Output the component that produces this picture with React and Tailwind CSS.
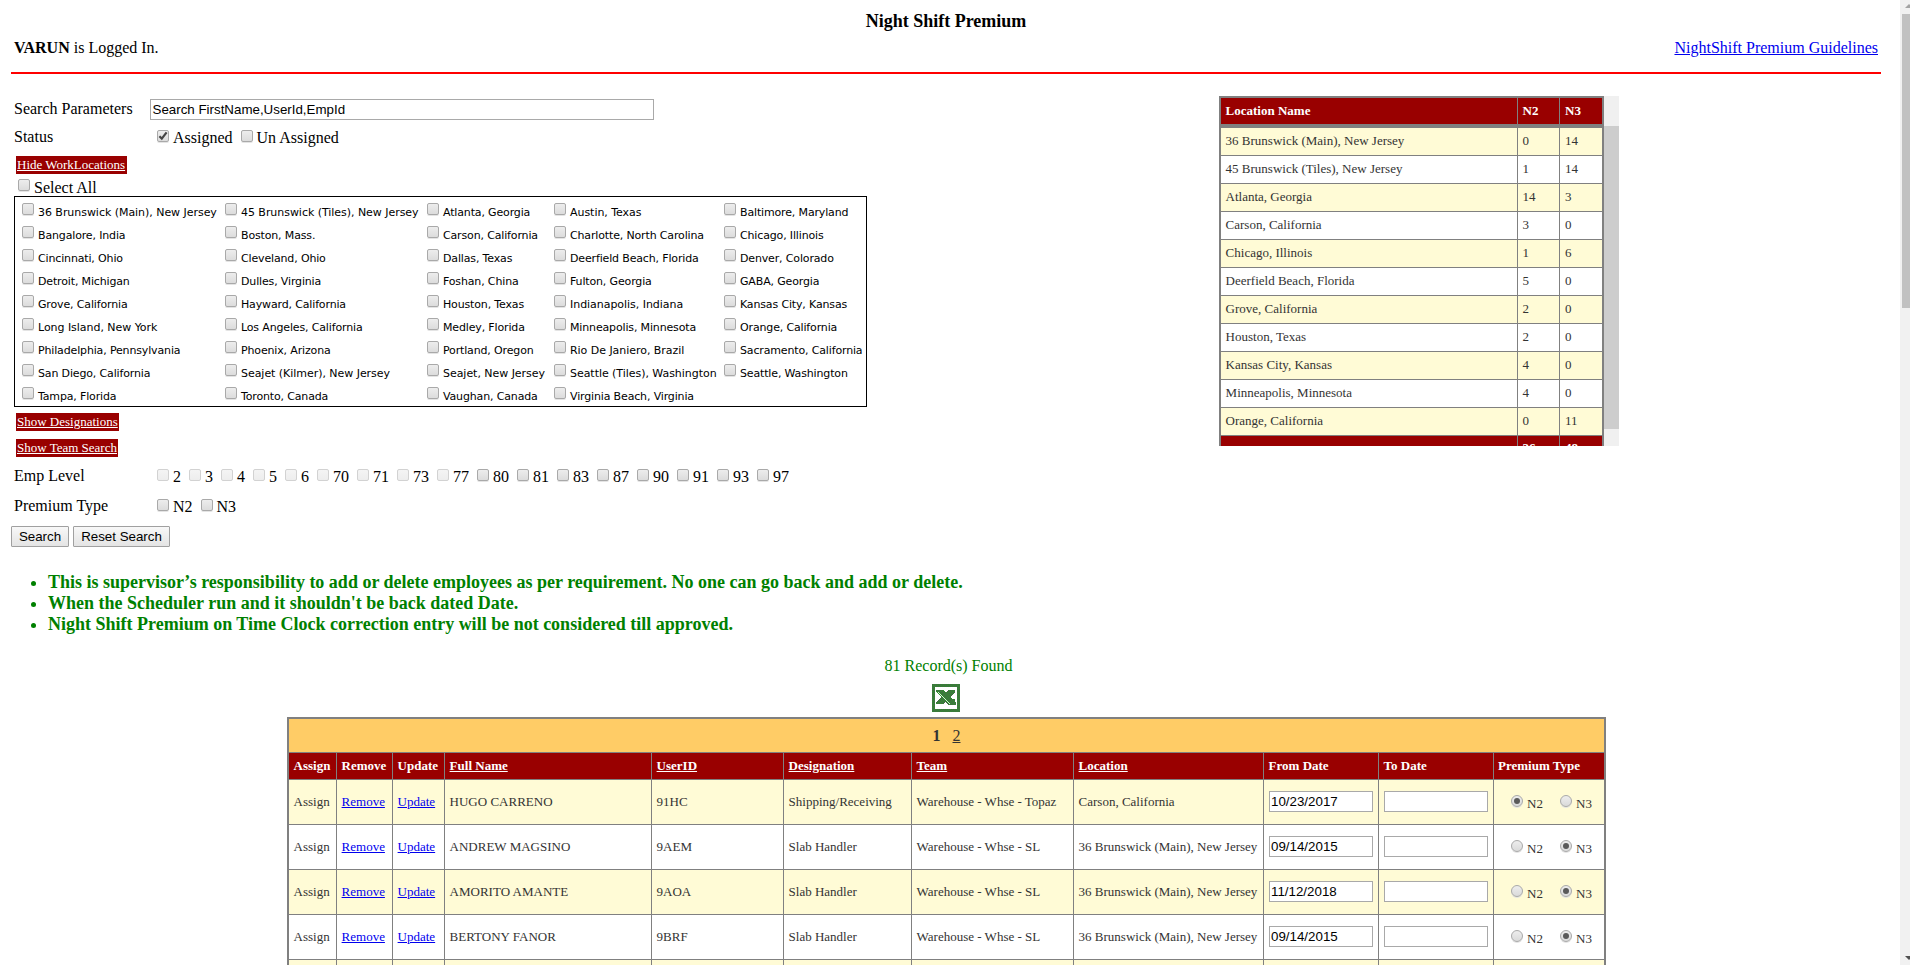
const locations = [
  ["36 Brunswick (Main), New Jersey", "45 Brunswick (Tiles), New Jersey", "Atlanta, Georgia", "Austin, Texas", "Baltimore, Maryland"],
  ["Bangalore, India", "Boston, Mass.", "Carson, California", "Charlotte, North Carolina", "Chicago, Illinois"],
  ["Cincinnati, Ohio", "Cleveland, Ohio", "Dallas, Texas", "Deerfield Beach, Florida", "Denver, Colorado"],
  ["Detroit, Michigan", "Dulles, Virginia", "Foshan, China", "Fulton, Georgia", "GABA, Georgia"],
  ["Grove, California", "Hayward, California", "Houston, Texas", "Indianapolis, Indiana", "Kansas City, Kansas"],
  ["Long Island, New York", "Los Angeles, California", "Medley, Florida", "Minneapolis, Minnesota", "Orange, California"],
  ["Philadelphia, Pennsylvania", "Phoenix, Arizona", "Portland, Oregon", "Rio De Janiero, Brazil", "Sacramento, California"],
  ["San Diego, California", "Seajet (Kilmer), New Jersey", "Seajet, New Jersey", "Seattle (Tiles), Washington", "Seattle, Washington"],
  ["Tampa, Florida", "Toronto, Canada", "Vaughan, Canada", "Virginia Beach, Virginia"],
];

// Names whose letters sit a little wider than the rest of the list.
const wideNames = new Set([
  "36 Brunswick (Main), New Jersey",
  "45 Brunswick (Tiles), New Jersey",
  "Long Island, New York",
  "Seajet (Kilmer), New Jersey",
  "Seajet, New Jersey",
  "Seattle (Tiles), Washington",
  "Austin, Texas",
  "Indianapolis, Indiana",
  "Rio De Janiero, Brazil",
]);

const summary = [
  ["36 Brunswick (Main), New Jersey", 0, 14],
  ["45 Brunswick (Tiles), New Jersey", 1, 14],
  ["Atlanta, Georgia", 14, 3],
  ["Carson, California", 3, 0],
  ["Chicago, Illinois", 1, 6],
  ["Deerfield Beach, Florida", 5, 0],
  ["Grove, California", 2, 0],
  ["Houston, Texas", 2, 0],
  ["Kansas City, Kansas", 4, 0],
  ["Minneapolis, Minnesota", 4, 0],
  ["Orange, California", 0, 11],
];

const employees = [
  ["HUGO CARRENO", "91HC", "Shipping/Receiving", "Warehouse - Whse - Topaz", "Carson, California", "10/23/2017", "N2"],
  ["ANDREW MAGSINO", "9AEM", "Slab Handler", "Warehouse - Whse - SL", "36 Brunswick (Main), New Jersey", "09/14/2015", "N3"],
  ["AMORITO AMANTE", "9AOA", "Slab Handler", "Warehouse - Whse - SL", "36 Brunswick (Main), New Jersey", "11/12/2018", "N3"],
  ["BERTONY FANOR", "9BRF", "Slab Handler", "Warehouse - Whse - SL", "36 Brunswick (Main), New Jersey", "09/14/2015", "N3"],
];

const levels = ["2", "3", "4", "5", "6", "70", "71", "73", "77", "80", "81", "83", "87", "90", "91", "93", "97"];
const columns = ["Assign", "Remove", "Update", "Full Name", "UserID", "Designation", "Team", "Location", "From Date", "To Date", "Premium Type"];
const gridCols = "grid grid-cols-[48px_56px_52px_207px_132px_128px_162px_190px_115px_115px_110px]";
const locCols = "grid grid-cols-[203px_202px_127px_170px_144px]";
const sumCols = "grid grid-cols-[297px_42px_42px]";
const cell = "border-r border-[#808080] pl-[4.6px]";

function Box({ checked, disabled }) {
  return (
    <span
      className={
        "flex size-[12px] shrink-0 items-center justify-center rounded-[2px] border bg-linear-to-b " +
        (disabled
          ? "border-[#d2d2d2] from-[#f4f4f4] to-[#ededed]"
          : "border-[#a9a9a9] from-[#ededed] to-[#dcdcdc] shadow-[0_1px_0_#e4e4e4]")
      }
    >
      {checked && (
        <svg viewBox="0 0 10 10" className="size-[10px]" fill="none" stroke="#444" strokeWidth="2.2">
          <path d="M1.4 5.2 L3.8 7.6 L8.6 1.4" />
        </svg>
      )}
    </span>
  );
}

function Radio({ checked }) {
  return (
    <span className="flex size-[12px] shrink-0 items-center justify-center rounded-full border border-[#a9a9a9] bg-linear-to-b from-[#ededed] to-[#dadada] shadow-[0_1px_0_#e4e4e4]">
      {checked && <span className="size-[6px] rounded-full bg-[#5a5a5a]" />}
    </span>
  );
}

function Check({ label, checked, disabled }) {
  return (
    <label className="flex whitespace-nowrap">
      <Box checked={checked} disabled={disabled} />
      <span className="ml-[4px] mt-px leading-[14px]">{label}</span>
    </label>
  );
}

function ToggleLink({ children, width }) {
  return (
    <a className={"block h-[18px] whitespace-nowrap bg-[#990000] pl-px text-[13px] leading-[18px] text-white underline " + width}>
      {children}
    </a>
  );
}

function ExcelIcon() {
  return (
    <svg className="size-[28px]" viewBox="0 0 28 28" shapeRendering="crispEdges">
      <defs>
        <pattern id="dither" width="2" height="2" patternUnits="userSpaceOnUse">
          <rect width="2" height="2" fill="#2a9a2a" />
          <rect width="1" height="1" fill="#4a5c4a" />
          <rect x="1" y="1" width="1" height="1" fill="#4a5c4a" />
        </pattern>
      </defs>
      <rect width="28" height="28" fill="url(#dither)" />
      <rect x="3" y="3" width="22" height="22" fill="#fff" />
      <path d="M4 6H12L14 8.5L16 6H23V8L18.500 13L20 15H23V18L24 19V21H17L13 18L11 20H4V18L9 13L4 8Z" fill="url(#dither)" />
      <path d="M6 8L18 20" stroke="#fff" strokeWidth="0.8" fill="none" />
    </svg>
  );
}

export default function App() {
  return (
    <div className="flex h-[965px] overflow-hidden bg-white font-['Liberation_Serif',serif] text-[16px] leading-[20px] text-black">
      <main className="h-[965px] w-[1900px] shrink-0 overflow-hidden">
        <div className="ml-[11px] w-[1870px]">
          <h1 className="h-[38px] pt-[9px] text-center text-[18px] font-bold leading-[24px]">Night Shift Premium</h1>
          <div className="flex h-[34px] justify-between px-[3px]">
            <span><b>VARUN</b> is Logged In.</span>
            <a className="text-[#0000ee] underline">NightShift Premium Guidelines</a>
          </div>
          <div className="h-[2px] bg-[#ff0000]" />

          <div className="flex h-[488px] justify-between">
            <section className="flex w-[1000px] flex-col">
              <div className="mt-[25px] flex h-[21px]">
                <span className="w-[139px] pl-[3px]">Search Parameters</span>
                <div className="h-[21px] w-[504px] border border-[#a9a9a9] pl-[1.5px] font-['Liberation_Sans',sans-serif] text-[13.33px] leading-[19px]">Search FirstName,UserId,EmpId</div>
              </div>
              <div className="mt-[7px] flex h-[29px]">
                <span className="w-[146px] pl-[3px]">Status</span>
                <div className="flex gap-[8px] pt-[3px]">
                  <Check label="Assigned" checked />
                  <Check label="Un Assigned" />
                </div>
              </div>
              <div className="ml-[5px]"><ToggleLink width="w-[111px]">Hide WorkLocations</ToggleLink></div>
              <div className="ml-[7px] mt-[5px] flex h-[17px]">
                <Box />
                <span className="ml-[4px] mt-[2px] leading-[14px]">Select All</span>
              </div>
              <div className="ml-[3px] h-[211px] w-[853px] border border-black pl-[7px] pt-[6px]">
                {locations.map((row) => (
                  <div key={row[0]} className={locCols + " h-[23px] whitespace-nowrap font-['DejaVu_Sans',sans-serif] text-[11px]"}>
                    {row.map((name) => (
                      <label key={name} className="flex">
                        <Box />
                        <span className={"ml-[4px] mt-[3px] leading-[14px] " + (wideNames.has(name) ? "tracking-[-0.04px]" : "tracking-[-0.15px]")}>{name}</span>
                      </label>
                    ))}
                  </div>
                ))}
              </div>
              <div className="ml-[5px] mt-[6px]"><ToggleLink width="w-[103px]">Show Designations</ToggleLink></div>
              <div className="ml-[5px] mt-[8px]"><ToggleLink width="w-[102px]">Show Team Search</ToggleLink></div>
              <div className="mt-[9px] flex h-[30px]">
                <span className="w-[146px] pl-[3px]">Emp Level</span>
                <div className="flex gap-[8px] pt-[3px]">
                  {levels.map((l, i) => <Check key={l} label={l} disabled={i < 9} />)}
                </div>
              </div>
              <div className="flex h-[30px]">
                <span className="w-[146px] pl-[3px]">Premium Type</span>
                <div className="flex gap-[8px] pt-[3px]">
                  <Check label="N2" />
                  <Check label="N3" />
                </div>
              </div>
              <div className="flex gap-[4px] font-['Liberation_Sans',sans-serif] text-[13.33px] leading-[19px]">
                <button className="h-[21px] w-[58px] rounded-[1px] border border-[#a0a0a0] bg-linear-to-b from-[#f8f8f8] to-[#e4e4e4]">Search</button>
                <button className="h-[21px] w-[97px] rounded-[1px] border border-[#a0a0a0] bg-linear-to-b from-[#f8f8f8] to-[#e4e4e4]">Reset Search</button>
              </div>
            </section>

            <section className="mr-[262px] mt-[22px] flex h-[350px] w-[400px] overflow-hidden text-[13px] text-[#333333]">
              <div className="h-[400px] w-[385px] shrink-0 border-2 border-[#808080]">
                <div className={sumCols + " h-[30px] border-b-4 border-[#808080] bg-[#990000] font-bold leading-[26px] text-white"}>
                  <span className={cell}>Location Name</span>
                  <span className={cell}>N2</span>
                  <span className="pl-[5px]">N3</span>
                </div>
                {summary.map((row, i) => (
                  <div key={row[0]} className={sumCols + " h-[28px] border-b border-[#808080] leading-[26px] " + (i % 2 ? "bg-white" : "bg-[#fffbd6]")}>
                    <span className={cell}>{row[0]}</span>
                    <span className={cell}>{row[1]}</span>
                    <span className="pl-[5px]">{row[2]}</span>
                  </div>
                ))}
                <div className={sumCols + " h-[28px] bg-[#990000] font-bold leading-[24px] text-white"}>
                  <span className={cell} />
                  <span className={cell}>36</span>
                  <span className="pl-[5px]">48</span>
                </div>
              </div>
              <div className="w-[15px] bg-[#f0f0f0] pt-[30px]"><div className="h-[303px] bg-[#cdcdcd]" /></div>
            </section>
          </div>

          <ul className="mt-[10px] ml-[17px] list-disc pl-[20px] text-[18px] font-bold leading-[21px] text-[#008000]">
            <li>This is supervisor’s responsibility to add or delete employees as per requirement. No one can go back and add or delete.</li>
            <li>When the Scheduler run and it shouldn't be back dated Date.</li>
            <li>Night Shift Premium on Time Clock correction entry will be not considered till approved.</li>
          </ul>
          <div className="mt-[21px] pl-[5px] text-center text-[#008000]">81 Record(s) Found</div>
          <div className="mt-[8px] flex justify-center"><ExcelIcon /></div>
        </div>

        <div className="ml-[287px] mt-[5px] w-[1319px] border-2 border-[#808080] text-[13px] text-[#333333]">
          <div className="flex h-[34px] items-center justify-center gap-[12px] border-b border-[#808080] bg-[#ffcc66] text-[16px]">
            <b>1</b>
            <a className="underline">2</a>
          </div>
          <div className={gridCols + " h-[27px] border-b border-[#808080] bg-[#990000] font-bold leading-[26px] text-white"}>
            {columns.map((c, i) => (
              <span key={c} className={"whitespace-nowrap " + (i < 10 ? cell : "pl-[4px]") + (i > 2 && i < 8 ? " underline" : "")}>{c}</span>
            ))}
          </div>
          {employees.map((e, i) => (
            <div key={e[0]} className={gridCols + " h-[45px] whitespace-nowrap border-b border-[#808080] leading-[44px] " + (i % 2 ? "bg-white" : "bg-[#fffbd6]")}>
              <span className={cell}>Assign</span>
              <span className={cell + " text-[#0000ee] underline"}>Remove</span>
              <span className={cell + " text-[#0000ee] underline"}>Update</span>
              {e.slice(0, 5).map((v) => (
                <span key={v} className={cell}>{v}</span>
              ))}
              <span className="border-r border-[#808080] pl-[5px] pt-[11px]">
                <span className="block h-[21px] w-[104px] border border-[#a9a9a9] bg-white pl-[1px] font-['Liberation_Sans',sans-serif] text-[13.33px] leading-[19px] text-black">{e[5]}</span>
              </span>
              <span className="border-r border-[#808080] pl-[5px] pt-[11px]">
                <span className="block h-[21px] w-[104px] border border-[#a9a9a9] bg-white" />
              </span>
              <span className="flex pl-[17px] pt-[15px] leading-[17px]">
                <Radio checked={e[6] === "N2"} />
                <span className="ml-[4px] w-[33px]">N2</span>
                <Radio checked={e[6] === "N3"} />
                <span className="ml-[4px]">N3</span>
              </span>
            </div>
          ))}
          <div className={gridCols + " h-[45px] bg-[#fffbd6]"}>
            {columns.map((c, i) => (
              <span key={c} className={i < 10 ? cell : ""} />
            ))}
          </div>
        </div>
      </main>

      <div className="flex h-[965px] w-[10px] shrink-0 flex-col overflow-hidden bg-[#f1f1f1]">
        <svg className="h-[14px] w-[10px] shrink-0" viewBox="0 0 10 14"><path d="M5 8L9 4L13 8Z" fill="#a3a3a3" /></svg>
        <div className="ml-[2px] h-[294px] bg-[#c1c1c1]" />
        <svg className="mt-auto h-[14px] w-[10px] shrink-0" viewBox="0 0 10 14"><path d="M5 5L9 9L13 5Z" fill="#505050" /></svg>
      </div>
    </div>
  );
}
